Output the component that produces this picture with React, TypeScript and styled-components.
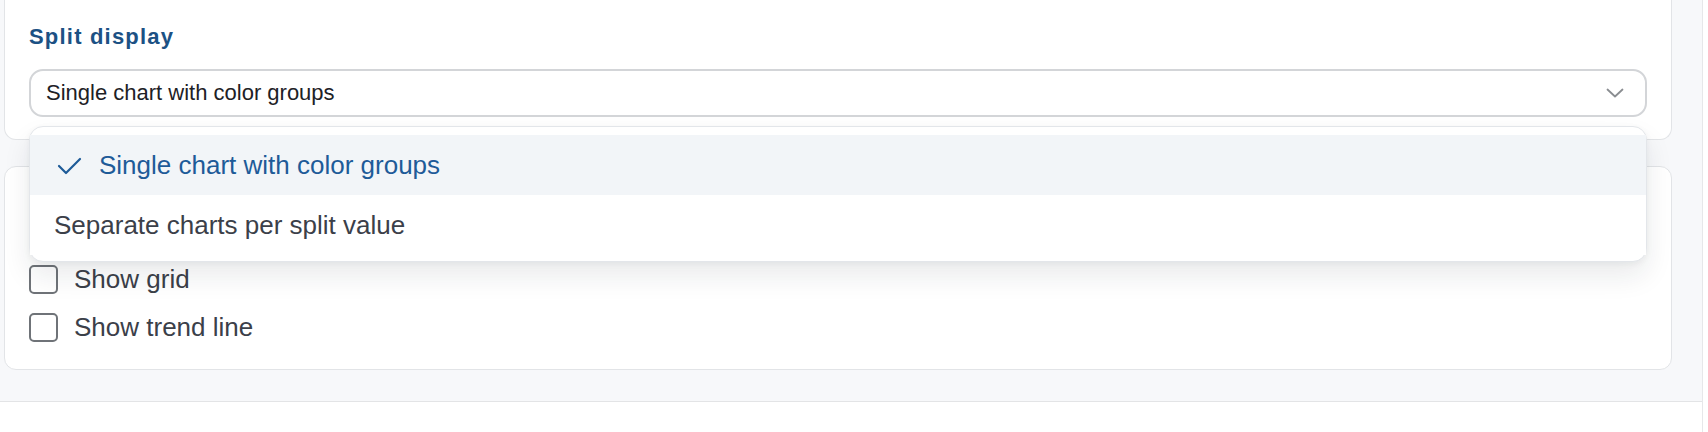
import styled, { createGlobalStyle } from "styled-components"

const Global = createGlobalStyle`
  body {
    margin: 0;
    background: #ffffff;
    font-family: "Liberation Sans", Arial, Helvetica, sans-serif;
  }
`

const Screen = styled.div`
  display: flex;
  height: 432px;
  overflow: hidden;
`

const Main = styled.div`
  flex: 1;
  display: flex;
  flex-direction: column;
`

const Panel = styled.div`
  display: flex;
  flex-direction: column;
  gap: 26px;
  height: 402px;
  box-sizing: border-box;
  padding: 0 30px 0 4px;
  background: #f7f8fa;
  border-bottom: 1px solid #e3e4e6;
`

const Gutter = styled.div`
  width: 5px;
  border-left: 1px solid #e6e7e9;
  background: #ffffff;
`

const Card = styled.section<{ $cut?: boolean }>`
  background: #ffffff;
  border: 1.5px solid #e2e4e7;
  border-radius: 12px;
  box-sizing: border-box;
  ${(p) =>
    p.$cut &&
    `
    border-top: none;
    border-top-left-radius: 0;
    border-top-right-radius: 0;
  `}
`

const SplitBody = styled.div`
  padding: 22px 24px 22px 24px;
`

const Label = styled.div`
  font-size: 22px;
  line-height: 30px;
  font-weight: 700;
  letter-spacing: 1.2px;
  color: #1c5184;
  margin-bottom: 17px;
`

const SelectWrap = styled.div`
  position: relative;
`

const SelectBox = styled.div`
  display: flex;
  align-items: center;
  justify-content: space-between;
  height: 48px;
  box-sizing: border-box;
  padding: 0 21px 0 15px;
  border: 2px solid #d3d5d8;
  border-radius: 14px;
  background: #ffffff;
  font-size: 22px;
  color: #1d2126;
`

const Menu = styled.div`
  position: absolute;
  top: calc(100% + 9px);
  left: 0;
  right: 0;
  z-index: 10;
  padding: 8px 0 6px;
  background: #ffffff;
  border: 1px solid #e3e6ea;
  border-radius: 14px;
  box-shadow: 0 14px 28px rgba(20, 30, 45, 0.09), 0 2px 6px rgba(20, 30, 45, 0.05);
`

const Option = styled.div<{ $selected?: boolean }>`
  display: flex;
  align-items: center;
  gap: 15px;
  height: 60px;
  box-sizing: border-box;
  padding: 1px 24px 0 24px;
  font-size: 26px;
  background: ${(p) => (p.$selected ? "#f2f5f8" : "#ffffff")};
  color: ${(p) => (p.$selected ? "#1e5b98" : "#3b4049")};
`

const Check = styled.svg`
  flex: none;
  margin-top: 1px;
`

const OptionsBody = styled.div`
  display: flex;
  flex-direction: column;
  gap: 19px;
  padding: 98px 24px 27px 24px;
`

const Row = styled.label`
  display: flex;
  align-items: center;
  gap: 16px;
  height: 29px;
  font-size: 26px;
  color: #3b4049;
`

const Box = styled.span`
  width: 29px;
  height: 29px;
  box-sizing: border-box;
  border: 2px solid #6f7378;
  border-radius: 5px;
  background: #ffffff;
  flex: none;
`

const Chevron = () => (
  <svg width="18" height="10" viewBox="0 0 18 10" fill="none">
    <path d="M1.5 1.5 L9 8.5 L16.5 1.5" stroke="#8a8d91" strokeWidth="1.8" strokeLinecap="round" strokeLinejoin="round" />
  </svg>
)

const options = ["Single chart with color groups", "Separate charts per split value"]
const toggles = ["Show grid", "Show trend line"]

export default function App() {
  const selected = options[0]
  return (
    <>
      <Global />
      <Screen>
        <Main>
          <Panel>
            <Card $cut>
              <SplitBody>
                <Label>Split display</Label>
                <SelectWrap>
                  <SelectBox>
                    <span>{selected}</span>
                    <Chevron />
                  </SelectBox>
                  <Menu>
                    {options.map((o) =>
                      o === selected ? (
                        <Option key={o} $selected>
                          <Check width="30" height="18" viewBox="0 0 30 18" fill="none">
                            <path d="M5 9 L12 16 L26 2" stroke="#1e5b98" strokeWidth="2.2" strokeLinecap="round" strokeLinejoin="round" />
                          </Check>
                          {o}
                        </Option>
                      ) : (
                        <Option key={o}>{o}</Option>
                      )
                    )}
                  </Menu>
                </SelectWrap>
              </SplitBody>
            </Card>
            <Card>
              <OptionsBody>
                {toggles.map((t) => (
                  <Row key={t}>
                    <Box />
                    {t}
                  </Row>
                ))}
              </OptionsBody>
            </Card>
          </Panel>
        </Main>
        <Gutter />
      </Screen>
    </>
  )
}
